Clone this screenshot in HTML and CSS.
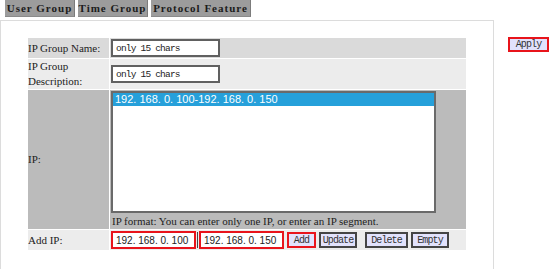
FILE: index.html
```html
<!DOCTYPE html>
<html lang="en">
<head>
  <meta charset="UTF-8" />
  <title>IP Group</title>
  <link rel="stylesheet" href="styles.css">
</head>
<body>

<div class="tabs">
  <span class="tab">User Group</span>
  <span class="tab">Time Group</span>
  <span class="tab tab-wide">Protocol Feature</span>
</div>

<div class="main">
  <div class="panel">
    <table class="form">
      <tr class="row-name">
        <td class="lbl">IP Group Name:</td>
        <td class="val"><input class="txt" type="text" value="only 15 chars" /></td>
      </tr>
      <tr class="row-desc">
        <td class="lbl">IP Group Description:</td>
        <td class="val"><input class="txt" type="text" value="only 15 chars" /></td>
      </tr>
      <tr class="row-ip">
        <td class="lbl">IP:</td>
        <td class="val">
          <div class="listbox">
            <div class="opt selected">192. 168. 0. 100-192. 168. 0. 150</div>
          </div>
          <div class="hint">IP format: You can enter only one IP, or enter an IP segment.</div>
        </td>
      </tr>
      <tr class="row-add">
        <td class="lbl">Add IP:</td>
        <td class="val">
          <div class="addrow">
            <input class="ip" type="text" value="192. 168. 0. 100" />
            <span class="sep"></span>
            <input class="ip" type="text" value="192. 168. 0. 150" />
            <button class="btn btn-hl btn-add">Add</button>
            <button class="btn btn-update">Update</button>
            <button class="btn btn-delete">Delete</button>
            <button class="btn btn-empty">Empty</button>
          </div>
        </td>
      </tr>
    </table>
  </div>

  <div class="side">
    <button class="btn btn-hl btn-apply">Apply</button>
  </div>
</div>

</body>
</html>
```

FILE: styles.css
```css
body {
  margin: 0;
  background: #fff;
  font-family: "Liberation Serif", serif;
  font-size: 11px;
  color: #222;
}

/* tabs */
.tabs {
  display: flex;
  gap: 3px;
  padding: 0 0 0 5px;
  height: 18px;
}

.tab {
  width: 70px;
  height: 17px;
  line-height: 17px;
  text-align: center;
  white-space: nowrap;
  box-sizing: border-box;
  background: #9c9c9c;
  border-right: 1px solid #7c7c7c;
  border-bottom: 1px solid #8a8a8a;
  font-weight: bold;
  font-size: 11px;
  letter-spacing: 1px;
  color: #1b1b1b;
}

.tab-wide {
  width: 100px;
}

/* main area */
.main {
  display: flex;
  align-items: flex-start;
  margin-top: 2px;
}

.panel {
  width: 492px;
  height: 260px;
  border: 1px solid #dcdcdc;
  border-bottom: none;
}

.side {
  margin-left: 14px;
  padding-top: 17px;
}

/* form table */
.form {
  border-spacing: 1px;
  margin: 16px 0 0 26px;
}

.form td {
  padding: 1px;
  vertical-align: middle;
}

.form td.lbl {
  width: 81px;
  padding: 0;
  line-height: 15px;
}

.form td.val {
  width: 354px;
}

.row-name td { background: #dadada; }
.row-desc td { background: #ececec; }
.row-ip td { background: #bbbbbb; }
.row-add td { background: #ececec; }

.row-desc td.lbl { padding-right: 10px; width: 71px; }

.txt {
  display: block;
  width: 109px;
  height: 18px;
  box-sizing: border-box;
  margin: 0;
  padding: 0 3px;
  border: 2px solid #606060;
  background: #fff;
  font-family: "Liberation Mono", monospace;
  font-size: 9.5px;
  letter-spacing: -0.8px;
  color: #222;
}

.listbox {
  width: 325px;
  height: 122px;
  box-sizing: border-box;
  border: 2px solid #6a6a6a;
  background: #fff;
}

.opt {
  height: 13px;
  line-height: 13px;
  padding-left: 2px;
  font-family: "Liberation Sans", sans-serif;
  font-size: 11px;
  color: #222;
}

.opt.selected {
  background: #26a0da;
  color: #fff;
}

.hint {
  line-height: 14px;
  margin-top: 1px;
  padding-left: 1px;
}

/* add ip row */
.addrow {
  display: flex;
  align-items: center;
}

.ip {
  width: 85px;
  height: 18px;
  box-sizing: border-box;
  margin: 0;
  padding: 0 3px;
  border: 2px solid #e8141b;
  background: #fff;
  font-family: "Liberation Sans", sans-serif;
  font-size: 10px;
  color: #222;
}

.sep {
  width: 1px;
  height: 16px;
  margin: 0 1px;
  background: #444;
}

.btn {
  height: 16px;
  box-sizing: border-box;
  margin: 0 0 0 3px;
  padding: 0;
  border: 2px solid #454545;
  background: #e2e2fc;
  font-family: "Liberation Mono", monospace;
  font-size: 10px;
  letter-spacing: -0.9px;
  color: #333;
  text-align: center;
}

.btn-hl {
  border-color: #e8141b;
}

.btn-add { width: 29px; }
.btn-update { width: 38px; margin-right: 5px; }
.btn-delete { width: 43px; }
.btn-empty { width: 38px; }

.btn-apply {
  width: 41px;
  height: 15px;
  margin: 0;
}
```
